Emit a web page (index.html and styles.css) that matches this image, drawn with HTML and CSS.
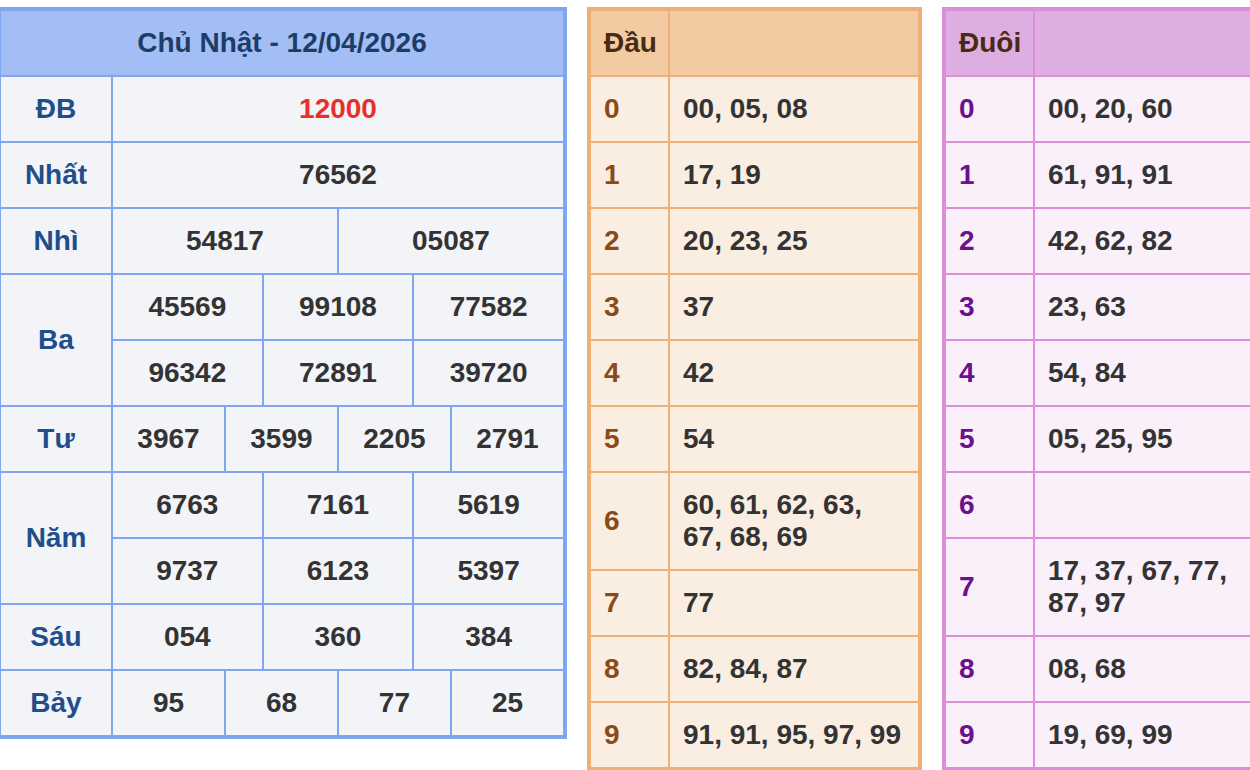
FILE: index.html
```html
<!DOCTYPE html>
<html lang="vi">
<head>
<meta charset="utf-8">
<title>Kết quả xổ số</title>
<link rel="stylesheet" href="styles.css">
</head>
<body>
<div class="board">
  <table class="kq">
    <colgroup>
      <col class="c-label">
      <col><col><col><col><col><col><col><col><col><col><col><col>
    </colgroup>
    <thead>
      <tr><th colspan="13" class="title">Chủ Nhật - 12/04/2026</th></tr>
    </thead>
    <tbody>
      <tr><td class="lbl">ĐB</td><td colspan="12" class="num db">12000</td></tr>
      <tr><td class="lbl">Nhất</td><td colspan="12" class="num">76562</td></tr>
      <tr><td class="lbl">Nhì</td><td colspan="6" class="num">54817</td><td colspan="6" class="num">05087</td></tr>
      <tr><td class="lbl" rowspan="2">Ba</td><td colspan="4" class="num">45569</td><td colspan="4" class="num">99108</td><td colspan="4" class="num">77582</td></tr>
      <tr><td colspan="4" class="num">96342</td><td colspan="4" class="num">72891</td><td colspan="4" class="num">39720</td></tr>
      <tr><td class="lbl">Tư</td><td colspan="3" class="num">3967</td><td colspan="3" class="num">3599</td><td colspan="3" class="num">2205</td><td colspan="3" class="num">2791</td></tr>
      <tr><td class="lbl" rowspan="2">Năm</td><td colspan="4" class="num">6763</td><td colspan="4" class="num">7161</td><td colspan="4" class="num">5619</td></tr>
      <tr><td colspan="4" class="num">9737</td><td colspan="4" class="num">6123</td><td colspan="4" class="num">5397</td></tr>
      <tr><td class="lbl">Sáu</td><td colspan="4" class="num">054</td><td colspan="4" class="num">360</td><td colspan="4" class="num">384</td></tr>
      <tr><td class="lbl">Bảy</td><td colspan="3" class="num">95</td><td colspan="3" class="num">68</td><td colspan="3" class="num">77</td><td colspan="3" class="num">25</td></tr>
    </tbody>
  </table>

  <table class="lt dau">
    <colgroup><col class="c-key"><col></colgroup>
    <thead><tr><th>Đầu</th><th></th></tr></thead>
    <tbody>
      <tr><td class="key">0</td><td>00, 05, 08</td></tr>
      <tr><td class="key">1</td><td>17, 19</td></tr>
      <tr><td class="key">2</td><td>20, 23, 25</td></tr>
      <tr><td class="key">3</td><td>37</td></tr>
      <tr><td class="key">4</td><td>42</td></tr>
      <tr><td class="key">5</td><td>54</td></tr>
      <tr><td class="key">6</td><td>60, 61, 62, 63, 67, 68, 69</td></tr>
      <tr><td class="key">7</td><td>77</td></tr>
      <tr><td class="key">8</td><td>82, 84, 87</td></tr>
      <tr><td class="key">9</td><td>91, 91, 95, 97, 99</td></tr>
    </tbody>
  </table>

  <table class="lt duoi">
    <colgroup><col class="c-key"><col></colgroup>
    <thead><tr><th>Đuôi</th><th></th></tr></thead>
    <tbody>
      <tr><td class="key">0</td><td>00, 20, 60</td></tr>
      <tr><td class="key">1</td><td>61, 91, 91</td></tr>
      <tr><td class="key">2</td><td>42, 62, 82</td></tr>
      <tr><td class="key">3</td><td>23, 63</td></tr>
      <tr><td class="key">4</td><td>54, 84</td></tr>
      <tr><td class="key">5</td><td>05, 25, 95</td></tr>
      <tr><td class="key">6</td><td></td></tr>
      <tr><td class="key">7</td><td>17, 37, 67, 77, 87, 97</td></tr>
      <tr><td class="key">8</td><td>08, 68</td></tr>
      <tr><td class="key">9</td><td>19, 69, 99</td></tr>
    </tbody>
  </table>
</div>
</body>
</html>
```

FILE: styles.css
```css
html, body {
  margin: 0;
  padding: 0;
  background: #ffffff;
  overflow: hidden;
}

body {
  font-family: "Liberation Sans", Arial, Helvetica, sans-serif;
  font-weight: bold;
  font-size: 28px;
  line-height: 32px;
  color: #333333;
}

.board {
  display: flex;
  align-items: flex-start;
  gap: 20px;
  padding-top: 7px;
  margin-left: -3px;
  width: 1300px;
}

table {
  border-collapse: separate;
  border-spacing: 0;
  table-layout: fixed;
  flex: none;
}

th, td {
  padding: 16px 13px;
  font-weight: bold;
  height: 32px;
  vertical-align: middle;
}

/* ---------- Results table ---------- */
.kq {
  width: 570px;
  border: 3px solid #7fa7f1;
  background: #f3f4f8;
}

.kq .c-label { width: 112px; }

.kq th, .kq td {
  border: 1px solid #7fa7f1;
  text-align: center;
  padding-left: 0;
  padding-right: 0;
}

.kq .title {
  background: #a2bef5;
  color: #1d3d66;
}

.kq .lbl {
  color: #1f4f8b;
}

.kq .num {
  color: #333333;
}

.kq .db {
  color: #e8302a;
}

/* ---------- Lô tô tables ---------- */
.lt {
  width: 335px;
  text-align: left;
}

.lt th, .lt td {
  text-align: left;
}

.lt .c-key { width: 79px; }

.dau {
  border: 3px solid #eeb077;
  background: #faede2;
}

.dau th, .dau td {
  border: 1px solid #eeb077;
}

.dau th {
  background: #f2cba3;
  color: #4a2a12;
}

.dau .key {
  color: #8a4b17;
}

.duoi {
  border: 3px solid #db8fda;
  background: #f9f0f9;
}

.duoi .c-key { width: 89px; }

.duoi th, .duoi td {
  border: 1px solid #db8fda;
}

.duoi th {
  background: #deaee3;
  color: #4a2a12;
}

.duoi .key {
  color: #6b108f;
}
```
